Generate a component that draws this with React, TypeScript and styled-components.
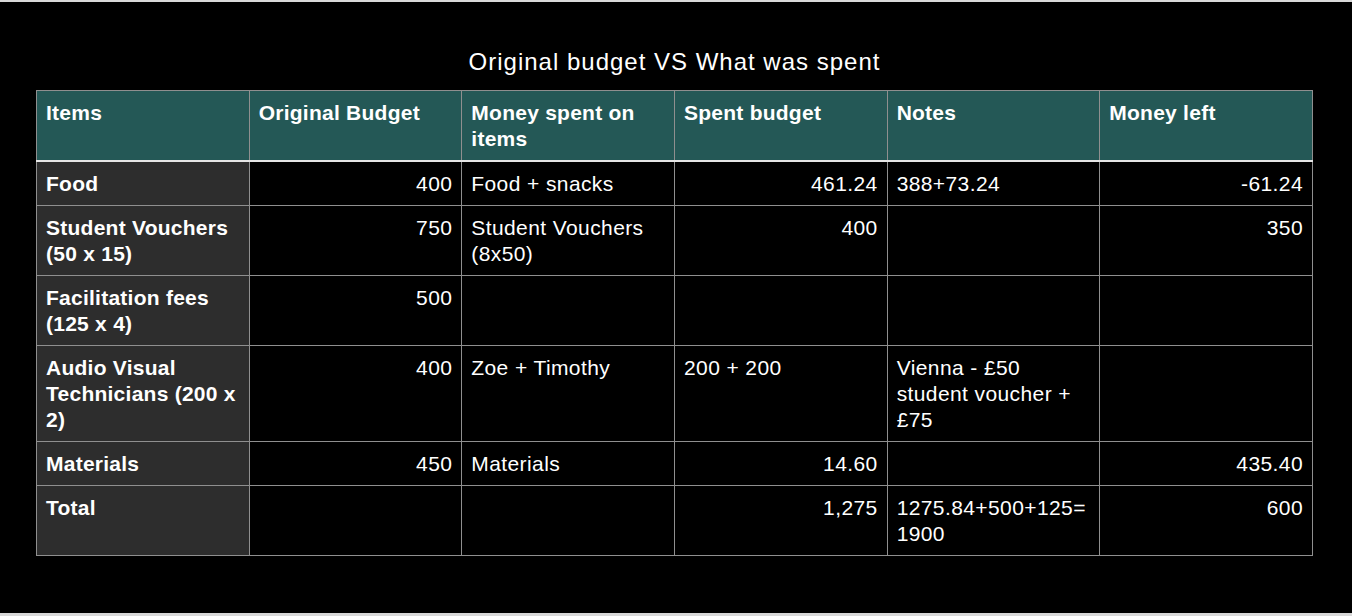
import React, { FC } from 'react';
import styled, { createGlobalStyle } from 'styled-components';

const GlobalStyle = createGlobalStyle`
  html, body {
    margin: 0;
    padding: 0;
    background: #000;
  }
  body {
    font-family: "Liberation Sans", Arial, sans-serif;
    color: #fff;
  }
`;

const Page = styled.div`
  box-sizing: border-box;
  width: 1352px;
  height: 616px;
  background: #000;
  border-top: 2px solid #d8d8d8;
  border-bottom: 3px solid #d8d8d8;
  padding: 45px 39px 0 36px;
`;

const Title = styled.h1`
  margin: 0 0 13px;
  font-size: 24px;
  font-weight: 400;
  letter-spacing: 1px;
  line-height: 30px;
  text-align: center;
  color: #fff;
`;

const Table = styled.table`
  width: 1277px;
  table-layout: fixed;
  border-collapse: collapse;
  font-size: 21px;
  line-height: 26px;
  letter-spacing: 0.4px;
  color: #fff;
`;

const HeadCell = styled.th`
  background: #245856;
  border: 1px solid #8f8f8f;
  border-bottom: 2px solid #e6e6e6;
  height: 70px;
  box-sizing: border-box;
  padding: 9px 9px 8px;
  text-align: left;
  vertical-align: top;
  font-weight: 700;
  letter-spacing: 0.25px;
`;

const Cell = styled.td<{ $label?: boolean; $num?: boolean }>`
  background: ${(p) => (p.$label ? '#2d2d2d' : '#000')};
  border: 1px solid #8f8f8f;
  padding: 9px 9px 8px 9px;
  text-align: ${(p) => (p.$num ? 'right' : 'left')};
  vertical-align: top;
  font-weight: ${(p) => (p.$label ? 700 : 400)};
  letter-spacing: ${(p) => (p.$label ? '0.25px' : '0.4px')};
`;

type Row = {
  item: string;
  original?: string;
  spentOn?: string;
  spent?: string;
  spentNum?: boolean;
  notes?: string;
  left?: string;
};

const headers = [
  'Items',
  'Original Budget',
  'Money spent on items',
  'Spent budget',
  'Notes',
  'Money left',
];

const rows: Row[] = [
  { item: 'Food', original: '400', spentOn: 'Food + snacks', spent: '461.24', spentNum: true, notes: '388+73.24', left: '-61.24' },
  { item: 'Student Vouchers (50 x 15)', original: '750', spentOn: 'Student Vouchers (8x50)', spent: '400', spentNum: true, left: '350' },
  { item: 'Facilitation fees (125 x 4)', original: '500' },
  { item: 'Audio Visual Technicians (200 x 2)', original: '400', spentOn: 'Zoe + Timothy', spent: '200 + 200', notes: 'Vienna - £50 student voucher + £75' },
  { item: 'Materials', original: '450', spentOn: 'Materials', spent: '14.60', spentNum: true, left: '435.40' },
  { item: 'Total', spent: '1,275', spentNum: true, notes: '1275.84+500+125= 1900', left: '600' },
];

const BudgetTable: FC = () => (
  <Table>
    <thead>
      <tr>
        {headers.map((h) => (
          <HeadCell key={h}>{h}</HeadCell>
        ))}
      </tr>
    </thead>
    <tbody>
      {rows.map((r) => (
        <tr key={r.item}>
          <Cell $label>{r.item}</Cell>
          <Cell $num>{r.original}</Cell>
          <Cell>{r.spentOn}</Cell>
          <Cell $num={r.spentNum}>{r.spent}</Cell>
          <Cell>{r.notes}</Cell>
          <Cell $num>{r.left}</Cell>
        </tr>
      ))}
    </tbody>
  </Table>
);

const App: FC = () => (
  <>
    <GlobalStyle />
    <Page>
      <Title>Original budget VS What was spent</Title>
      <BudgetTable />
    </Page>
  </>
);

export default App;
